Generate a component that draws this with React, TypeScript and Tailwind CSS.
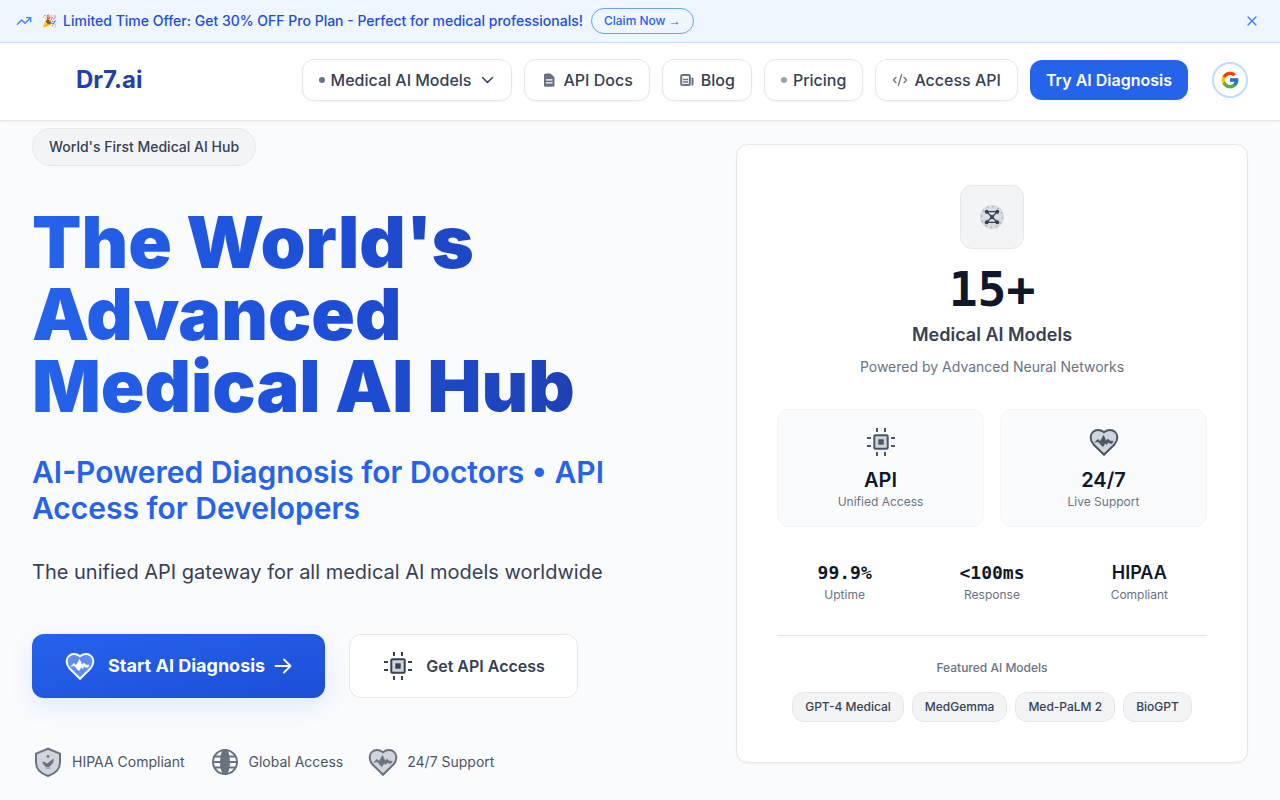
import React from "react";
import { CodeXml, TrendingUp, X } from "lucide-react";
import { FcGoogle } from "react-icons/fc";

function HeartPulseIcon({ fill = "#d1d5db" }: { fill?: string }) {
  return (
    <svg viewBox="0 0 24 24" className="size-8 shrink-0" aria-hidden="true">
      <path
        d="M12 21.6 4.2 13.9C2.8 12.4 2 10.6 2 8.5 2 5.4 4.4 3 7.5 3c1.74 0 3.41.81 4.5 1.7C13.09 3.81 14.76 3 16.5 3 19.6 3 22 5.4 22 8.5c0 2.1-.8 3.9-2.2 5.4z"
        fill={fill}
        stroke="currentColor"
        strokeWidth="1.5"
      />
      <path
        d="M5 12.3 7.4 9.9 9 11.4 10.5 9.2 11.600 7 12.7 9 13.4 11 15 9.7 16.800 11.300 19 11.300 18 13.200 16.500 13.200 15.400 12.200 14.100 14 12.800 13 11.300 15.600 9.700 14.200 9 13.100 7.500 11.900z"
        fill="currentColor"
        stroke="currentColor"
        strokeWidth="0.3"
        strokeLinejoin="round"
      />
    </svg>
  );
}

function ChipIcon() {
  return (
    <svg viewBox="0 0 32 32" className="size-8 shrink-0" aria-hidden="true" fill="none" stroke="currentColor" strokeWidth="2">
      <rect x="9.3" y="9.3" width="13.4" height="13.4" rx="1" fill="#d1d5db" />
      <rect x="13.3" y="13.3" width="5.4" height="5.4" fill="currentColor" stroke="none" />
      <path d="M12 2v4M20 2v4M12 26v4M20 26v4M2 12h4M2 20h4M26 12h4M26 20h4" />
    </svg>
  );
}

function ShieldIcon() {
  return (
    <svg viewBox="0 0 32 32" className="size-8 shrink-0" aria-hidden="true">
      <path
        d="M16 2.700 4 7.600v9.200c0 6.200 4.800 10.800 12 13.200 7.200-2.400 12-7 12-13.200V7.600z"
        fill="#d1d5db"
        stroke="currentColor"
        strokeWidth="2"
      />
      <circle cx="16" cy="10.400" r="1.400" fill="currentColor" />
      <path d="m10.500 15 4.500 2.600 6.800-5.200-.6 4.300-4 4.300h-3.400L11 18z" fill="currentColor" />
      <path d="M13.500 22h5" stroke="#9ca3af" strokeWidth="1.500" />
    </svg>
  );
}

function GlobeIcon() {
  return (
    <svg viewBox="0 0 32 32" className="size-8 shrink-0" aria-hidden="true" fill="none" stroke="currentColor" strokeWidth="2">
      <circle cx="16" cy="16" r="12" />
      <ellipse cx="16" cy="16" rx="4" ry="12" fill="currentColor" />
      <path d="M4 16h24M6 10.600h20M6 21.400h20" />
    </svg>
  );
}

function NetworkIcon() {
  return (
    <svg viewBox="0 0 32 32" className="size-8" aria-hidden="true">
      <circle cx="16" cy="16" r="12" fill="#d9dce1" />
      <circle cx="16" cy="16" r="10.500" fill="none" stroke="#a8adb6" strokeWidth="1.500" strokeDasharray="1.600 3.900" />
      <g stroke="currentColor" strokeWidth="1.300" fill="currentColor">
        <path d="M10.700 10.700h10.600M10.700 21.300h10.600M10.700 10.700l10.600 10.600M21.300 10.700 10.700 21.300" fill="none" />
        <g stroke="none">
          <circle cx="10.700" cy="10.700" r="2" />
          <circle cx="21.300" cy="10.700" r="2" />
          <circle cx="10.700" cy="21.300" r="2" />
          <circle cx="21.300" cy="21.300" r="2" />
          <circle cx="16" cy="16" r="2" />
        </g>
      </g>
    </svg>
  );
}

function DocIcon() {
  return (
    <svg viewBox="0 0 16 16" className="size-4 text-gray-500" aria-hidden="true">
      <path
        fillRule="evenodd"
        d="M4.500 1.500h5l4 3.700v8a1.500 1.500 0 0 1-1.500 1.500H4.500A1.500 1.500 0 0 1 3 13.200V3a1.500 1.500 0 0 1 1.500-1.500zM5 7.300v1.200h6.500V7.300zm0 3v1.200h6.500v-1.200z"
        fill="currentColor"
      />
    </svg>
  );
}

function NewsIcon() {
  return (
    <svg viewBox="0 0 16 16" className="size-4 text-gray-500" aria-hidden="true">
      <rect x="2.200" y="3" width="8.600" height="10" rx="1" fill="none" stroke="currentColor" strokeWidth="2" />
      <path d="M4 7.500h5M4 10h5" fill="none" stroke="currentColor" strokeWidth="1.300" />
      <path d="M12.500 5.500h.8a1.200 1.200 0 0 1 1.200 1.200v5.500a1.200 1.200 0 0 1-1.200 1.200h-.8z" fill="currentColor" />
    </svg>
  );
}

function ChevronIcon() {
  return (
    <svg viewBox="0 0 16 16" className="ml-2 size-4" aria-hidden="true" fill="none" stroke="currentColor" strokeWidth="1.500" strokeLinecap="round" strokeLinejoin="round">
      <path d="m3.500 5.500 5 5 5-5" />
    </svg>
  );
}

function ArrowIcon() {
  return (
    <svg viewBox="0 0 20 20" className="size-5" aria-hidden="true" fill="none" stroke="currentColor" strokeWidth="1.800" strokeLinecap="round" strokeLinejoin="round">
      <path d="M2.500 10h15M11 3.500l6.500 6.500-6.500 6.500" />
    </svg>
  );
}

const navItem =
  "flex items-center rounded-xl border border-gray-200 bg-white px-4 py-2 font-medium text-gray-700 shadow-xs";

const features = [
  { icon: <ChipIcon />, title: "API", text: "Unified Access" },
  { icon: <HeartPulseIcon />, title: "24/7", text: "Live Support" },
];

const stats = [
  { value: "99.9%", label: "Uptime", mono: true },
  { value: "<100ms", label: "Response", mono: true },
  { value: "HIPAA", label: "Compliant", mono: false },
];

const models = ["GPT-4 Medical", "MedGemma", "Med-PaLM 2", "BioGPT"];

const assurances = [
  { icon: <ShieldIcon />, text: "HIPAA Compliant" },
  { icon: <GlobeIcon />, text: "Global Access" },
  { icon: <HeartPulseIcon />, text: "24/7 Support" },
];

function PromoBanner() {
  return (
    <div className="flex items-center border-b border-[#bfdbfe] bg-[#eff6ff] px-4 py-2 text-sm font-medium text-[#1d4ed8]">
      <TrendingUp className="mr-2.5 size-4 text-[#3b82f6]" aria-hidden="true" />
      <p className="mr-2 flex items-center gap-1.5">
        <span className="text-xs">🎉</span>
        <span>Limited Time Offer: Get 30% OFF Pro Plan - Perfect for medical professionals!</span>
      </p>
      <button type="button" className="rounded-full border border-[#60a5fa] px-3 py-1 text-xs font-medium text-[#2563eb]">
        Claim Now <span className="font-['Liberation_Sans',sans-serif] leading-none">→</span>
      </button>
      <button type="button" aria-label="Dismiss" className="ml-auto p-1 text-[#3b82f6]">
        <X className="size-4" aria-hidden="true" />
      </button>
    </div>
  );
}

function Header() {
  return (
    <header className="flex items-center justify-between border-b border-gray-200 bg-white pt-4 pr-8 pb-[19px] pl-19 shadow-xs">
      <a href="#" className="text-2xl font-bold text-[#1e40af]">
        Dr7.ai
      </a>
      <nav className="flex items-center gap-3">
        <button type="button" className={navItem}>
          <span className="mr-1.5 size-1.5 rounded-full bg-gray-500" />
          Medical AI Models
          <ChevronIcon />
        </button>
        <a href="#docs" className={navItem + " gap-1.5"}>
          <DocIcon />
          API Docs
        </a>
        <a href="#blog" className={navItem + " gap-1.5"}>
          <NewsIcon />
          Blog
        </a>
        <a href="#pricing" className={navItem + " gap-1.5"}>
          <span className="size-1.5 rounded-full bg-gray-400" />
          Pricing
        </a>
        <a href="#access" className={navItem + " gap-1.5"}>
          <CodeXml className="size-4 text-gray-500" aria-hidden="true" />
          Access API
        </a>
        <a href="#diagnosis" className="rounded-xl bg-[#2563eb] px-4 py-2 font-semibold text-white">
          Try AI Diagnosis
        </a>
        <button
          type="button"
          aria-label="Sign in with Google"
          className="ml-3 flex size-9 items-center justify-center rounded-full border-2 border-[#bfdbfe] bg-white"
        >
          <FcGoogle className="size-5" aria-hidden="true" />
        </button>
      </nav>
    </header>
  );
}

function Intro() {
  return (
    <div>
      <span className="inline-block rounded-full border border-gray-200 bg-gray-100 px-4 py-2 align-top text-sm font-medium text-gray-700">
        World's First Medical AI Hub
      </span>
      <h1 className="mt-10 bg-linear-to-r from-[#2563eb] via-[#1d4ed8] to-[#1e40af] bg-clip-text text-7xl leading-none font-black text-transparent">
        The World's
        <br />
        Advanced
        <br />
        Medical AI Hub
      </h1>
      <p className="mt-8 text-3xl font-semibold text-[#2563eb]">
        AI-Powered Diagnosis for Doctors • API Access for Developers
      </p>
      <p className="mt-8 text-xl text-gray-700">The unified API gateway for all medical AI models worldwide</p>
      <div className="mt-12 flex gap-6">
        <a
          href="#diagnosis"
          className="flex h-16 items-center gap-3 rounded-xl bg-linear-to-br from-[#2563eb] to-[#1d4ed8] px-8 text-lg font-bold text-white shadow-[0_8px_24px_rgba(37,99,235,0.12)]"
        >
          <HeartPulseIcon fill="#5f8cf0" />
          <span className="flex items-center gap-2">
            Start AI Diagnosis
            <ArrowIcon />
          </span>
        </a>
        <a
          href="#access"
          className="flex h-16 items-center gap-3 rounded-xl border border-gray-200 bg-white px-8 font-semibold text-gray-700"
        >
          <ChipIcon />
          Get API Access
        </a>
      </div>
      <ul className="mt-12 flex gap-6 text-sm text-gray-600">
        {assurances.map((item) => (
          <li key={item.text} className="flex items-center gap-2">
            <span className="text-gray-500">{item.icon}</span>
            {item.text}
          </li>
        ))}
      </ul>
    </div>
  );
}

function StatsCard() {
  return (
    <section className="ml-auto w-full max-w-lg rounded-xl border border-gray-200 bg-white p-10 text-center shadow-xs">
      <div className="mx-auto flex size-16 items-center justify-center rounded-xl border border-gray-200 bg-gray-100 text-gray-700">
        <NetworkIcon />
      </div>
      <p className="mt-4 font-['DejaVu_Sans_Mono',monospace] text-5xl font-bold text-slate-900">15+</p>
      <h2 className="mt-2 text-lg font-semibold text-gray-700">Medical AI Models</h2>
      <p className="mt-2 text-sm text-gray-500">Powered by Advanced Neural Networks</p>
      <div className="mt-8 grid grid-cols-2 gap-4">
        {features.map((feature) => (
          <div key={feature.title} className="rounded-xl border border-gray-100 bg-[#fafbfd] p-4">
            <div className="mb-2 flex justify-center text-gray-600">{feature.icon}</div>
            <p className="text-xl font-semibold text-slate-900">{feature.title}</p>
            <p className="text-xs text-gray-500">{feature.text}</p>
          </div>
        ))}
      </div>
      <dl className="mt-8 grid grid-cols-3 gap-3">
        {stats.map((stat) => (
          <div key={stat.label} className="flex flex-col-reverse">
            <dt className="text-xs text-gray-500">{stat.label}</dt>
            <dd
              className={
                stat.mono
                  ? "font-['DejaVu_Sans_Mono',monospace] text-lg font-bold text-slate-900"
                  : "text-lg font-semibold text-slate-900"
              }
            >
              {stat.value}
            </dd>
          </div>
        ))}
      </dl>
      <div className="mt-8 border-t border-gray-200 pt-6">
        <h3 className="text-xs font-medium text-gray-500">Featured AI Models</h3>
        <ul className="mt-4 flex flex-wrap justify-center gap-2 text-xs font-medium text-gray-700">
          {models.map((model) => (
            <li key={model} className="rounded-xl border border-gray-200 bg-gray-100 px-3 py-1.5">
              {model}
            </li>
          ))}
        </ul>
      </div>
    </section>
  );
}

export default function App() {
  return (
    <div className="min-h-screen bg-[#fafbfd] font-[Inter,sans-serif]">
      <PromoBanner />
      <Header />
      <main className="grid grid-cols-2 items-center gap-16 px-8 pt-[7px] pb-5">
        <Intro />
        <StatsCard />
      </main>
    </div>
  );
}
